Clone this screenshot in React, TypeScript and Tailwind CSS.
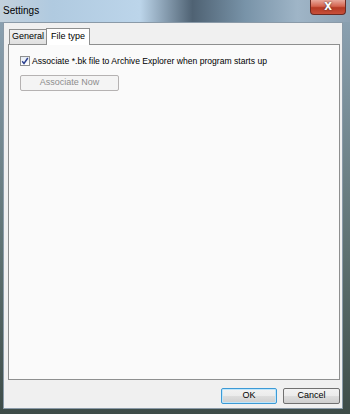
import React from "react";

export default function App() {
  const font = { fontFamily: '"Liberation Sans", Arial, sans-serif' };
  return (
    <div
      className="w-[350px] h-[414px] flex flex-col overflow-hidden bg-[linear-gradient(90deg,#4d5d5e_0%,#6f8a9a_20%,#9db4c8_45%,#5b6e78_60%,#8aa3b6_80%,#7b8e98_100%)]"
      style={font}
    >
      <div className="h-[22px] flex items-start relative bg-[linear-gradient(90deg,#c3d1dc_0%,#b0cae0_15%,#bcd5ea_40%,#4f6273_55%,#7893a8_70%,#9fb5c7_85%,#8ea2b3_100%)]">
        <span className="pl-[3px] pt-[4px] text-[10px] leading-[13px] text-black">Settings</span>
        <div className="ml-auto mr-[4px] w-[36px] h-[15px] rounded-b-[4px] border border-t-0 border-[#6b2a22] bg-[linear-gradient(180deg,#e8a89b_0%,#d4644f_45%,#b53a24_55%,#c8503a_100%)] flex items-center justify-center">
          <span className="text-white text-[10px] font-bold leading-none" style={{ fontFamily: '"DejaVu Sans", sans-serif', textShadow: "0 0 2px #333" }}>X</span>
        </div>
      </div>
      <div className="flex-1 flex pl-[3px] pr-[7px] pb-[5px] bg-[linear-gradient(180deg,#8aa0b0_0%,#5d7070_60%,#3e4c48_100%)]">
        <div className="flex-1 flex flex-col bg-[#f0f0f0] border border-[#8a9aa8] pl-[4px] pr-[2px] pt-[4px]">
          <div className="flex items-end h-[17px] pl-[1px]">
            <div className="h-[15px] w-[38px] flex items-center justify-center border border-b-0 border-[#8e8f8f] bg-[linear-gradient(180deg,#f2f2f2,#e0e0e0)] text-[9px] text-black">
              General
            </div>
            <div className="h-[17px] w-[44px] -ml-px flex items-center justify-center border border-b-0 border-[#8e8f8f] bg-white text-[9px] text-black relative z-10 mb-[-1px]">
              File type
            </div>
          </div>
          <div className="h-[336px] border border-[#8e8f8f] bg-[#fafafa] pl-[11px] pt-[10px]">
            <div className="flex items-center gap-[2px]">
              <div className="w-[10px] h-[10px] border border-[#8e8f8f] bg-[linear-gradient(180deg,#e6ecf5,#ffffff)] flex items-center justify-center">
                <svg width="8" height="8" viewBox="0 0 8 8">
                  <path d="M1.2 4.2 L3 6.5 L6.8 1" stroke="#2a3f8f" strokeWidth="1.4" fill="none" />
                </svg>
              </div>
              <span className="text-[8.6px] leading-[12px] text-black whitespace-nowrap">Associate *.bk file to Archive Explorer when program starts up</span>
            </div>
            <div className="mt-[8px] w-[99px] h-[16px] border border-[#b5b2b2] rounded-[2px] bg-[#f4f4f4] flex items-center justify-center text-[9px] text-[#8d8d8d]">
              Associate Now
            </div>
          </div>
          <div className="flex justify-end gap-[6px] pt-[8px]">
            <div className="w-[56px] h-[16px] rounded-[2px] border border-[#3c9ad6] bg-[linear-gradient(180deg,#f2f2f2_0%,#ebebeb_50%,#dddddd_51%,#cfcfcf_100%)] shadow-[inset_0_0_0_1px_#bfe6fb] flex items-center justify-center text-[9px] text-black">
              OK
            </div>
            <div className="w-[57px] h-[16px] rounded-[2px] border border-[#707070] bg-[linear-gradient(180deg,#f2f2f2_0%,#ebebeb_50%,#dddddd_51%,#cfcfcf_100%)] flex items-center justify-center text-[9px] text-black">
              Cancel
            </div>
          </div>
        </div>
      </div>
    </div>
  );
}
